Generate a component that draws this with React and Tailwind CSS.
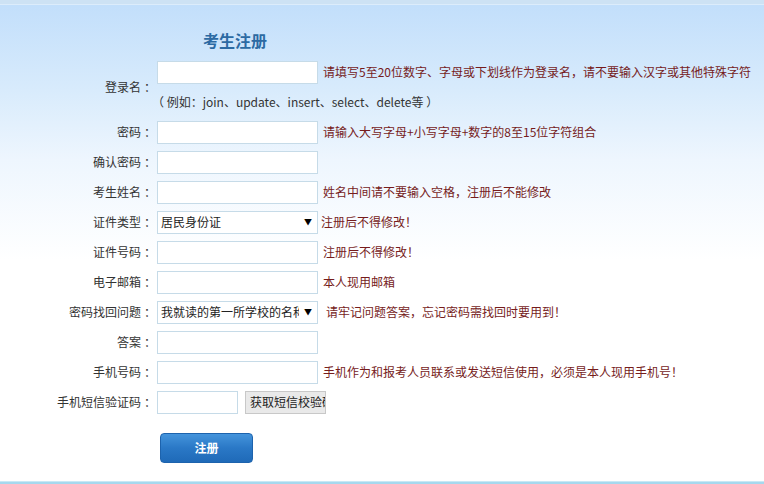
import React from "react";

const font = { fontFamily: '"Noto Sans CJK SC", "Noto Sans", sans-serif' };

function Label({ children }) {
  return (
    <div className="w-[156px] shrink-0 text-right text-[#333333] whitespace-nowrap">
      {children}
      <span className="ml-[3px]">：</span>
    </div>
  );
}

function Input({ w = "w-[161px]" }) {
  return <div className={`${w} h-[23px] shrink-0 bg-white border border-[#c6dbe8]`} />;
}

function Hint({ children, ml = "ml-[5px]" }) {
  return <div className={`${ml} text-[#761c1c] whitespace-nowrap`}>{children}</div>;
}

function Select({ text }) {
  return (
    <div className="w-[161px] h-[23px] shrink-0 bg-white border border-[#c6dbe8] flex items-center relative overflow-hidden">
      <span className="pl-[3px] whitespace-nowrap text-[#222]">{text}</span>
      <span className="absolute right-0 top-0 h-full w-[18px] bg-white flex items-center justify-center text-[8px] text-black">▼</span>
    </div>
  );
}

function Row({ label, children }) {
  return (
    <div className="h-[30px] flex items-center">
      <Label>{label}</Label>
      <div className="ml-[1px] flex items-center">{children}</div>
    </div>
  );
}

export default function App() {
  return (
    <div
      className="w-[764px] h-[484px] relative overflow-hidden text-[12px] leading-none flex flex-col bg-[linear-gradient(to_bottom,#c1defb_0px,#d8ebfc_90px,#eef6fe_160px,#ffffff_260px)]"
      style={font}
    >
      <div className="h-[5px] bg-[#cde2f4] border-b border-[#dcecfb] shrink-0" />
      <div className="pt-[20px] h-[52px] shrink-0 pl-[203px] flex items-start">
        <div className="text-[16px] font-bold text-[#2c6aa3] h-[30px] flex items-center">考生注册</div>
      </div>

      <div className="flex items-center h-[60px]">
        <Label>登录名</Label>
        <div className="ml-[1px] flex flex-col">
          <div className="h-[30px] flex items-center">
            <Input />
            <Hint>请填写5至20位数字、字母或下划线作为登录名，请不要输入汉字或其他特殊字符</Hint>
          </div>
          <div className="h-[30px] flex items-center text-[#333333] whitespace-nowrap -ml-[5px]">
            （ 例如：join、update、insert、select、delete等 ）
          </div>
        </div>
      </div>

      <Row label="密码">
        <Input />
        <Hint>请输入大写字母+小写字母+数字的8至15位字符组合</Hint>
      </Row>
      <Row label="确认密码">
        <Input />
      </Row>
      <Row label="考生姓名">
        <Input />
        <Hint>姓名中间请不要输入空格，注册后不能修改</Hint>
      </Row>
      <Row label="证件类型">
        <Select text="居民身份证" />
        <Hint ml="ml-[3px]">注册后不得修改！</Hint>
      </Row>
      <Row label="证件号码">
        <Input />
        <Hint>注册后不得修改！</Hint>
      </Row>
      <Row label="电子邮箱">
        <Input />
        <Hint>本人现用邮箱</Hint>
      </Row>
      <Row label="密码找回问题">
        <Select text="我就读的第一所学校的名称" />
        <Hint ml="ml-[8px]">请牢记问题答案，忘记密码需找回时要用到！</Hint>
      </Row>
      <Row label="答案">
        <Input />
      </Row>
      <Row label="手机号码">
        <Input />
        <Hint>手机作为和报考人员联系或发送短信使用，必须是本人现用手机号！</Hint>
      </Row>
      <Row label="手机短信验证码">
        <Input w="w-[81px]" />
        <div className="ml-[7px] w-[81px] h-[23px] bg-[#e9e9e9] border border-[#c8c8c8] overflow-hidden flex items-center">
          <span className="pl-[4px] whitespace-nowrap text-[#222]">获取短信校验码</span>
        </div>
      </Row>

      <div className="pl-[160px] pt-[16px]">
        <div className="w-[93px] h-[30px] rounded-[4px] border border-[#1d63ad] bg-[linear-gradient(to_bottom,#4494dc,#2a78c6_50%,#1f6ab8)] flex items-center justify-center text-white font-bold text-[12px]">
          注册
        </div>
      </div>

      <div className="absolute left-0 right-0 bottom-0 h-[3px] bg-[#a6d8ee] border-t border-[#c9e8f5]" />
    </div>
  );
}
